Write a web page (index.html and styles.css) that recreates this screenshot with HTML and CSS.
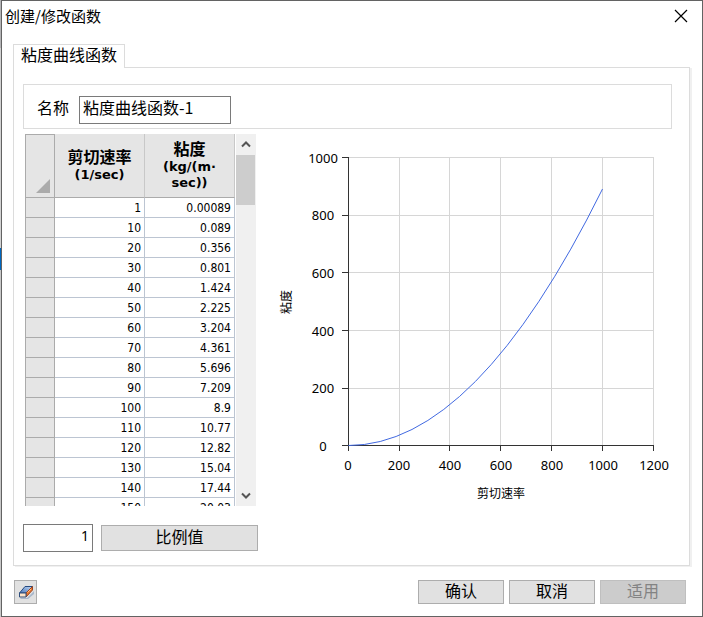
FILE: index.html
```html
<!DOCTYPE html>
<html lang="zh-CN">
<head>
<meta charset="utf-8">
<title>创建/修改函数</title>
<link rel="stylesheet" href="styles.css">
</head>
<body>
<main class="dialog">
  <header class="titlebar">
    <h1 class="title">创建/修改函数</h1>
    <button class="close" type="button" aria-label="关闭">
      <svg width="14" height="14" viewBox="0 0 14 14"><path d="M1 1l12 12M13 1L1 13" stroke="#000" stroke-width="1.2" fill="none"/></svg>
    </button>
  </header>

  <div class="tabs"><button class="tab" type="button">粘度曲线函数</button></div>

  <section class="panel">
    <div class="name-box">
      <label for="name">名称</label>
      <input id="name" class="name-input" type="text" value="粘度曲线函数-1">
    </div>

    <div class="content">
      <div class="grid">
        <div class="grid-view">
          <table class="data">
            <thead>
              <tr>
                <th class="corner"><svg width="14" height="14" viewBox="0 0 14 14"><path d="M14 0V14H0z" fill="#ababab"/></svg></th>
                <th><span class="cn">剪切速率</span><br>(1/sec)</th>
                <th><span class="cn">粘度</span><br>(kg/(m·<br>sec))</th>
              </tr>
            </thead>
            <tbody>
              <tr><th></th><td>1</td><td>0.00089</td></tr>
              <tr><th></th><td>10</td><td>0.089</td></tr>
              <tr><th></th><td>20</td><td>0.356</td></tr>
              <tr><th></th><td>30</td><td>0.801</td></tr>
              <tr><th></th><td>40</td><td>1.424</td></tr>
              <tr><th></th><td>50</td><td>2.225</td></tr>
              <tr><th></th><td>60</td><td>3.204</td></tr>
              <tr><th></th><td>70</td><td>4.361</td></tr>
              <tr><th></th><td>80</td><td>5.696</td></tr>
              <tr><th></th><td>90</td><td>7.209</td></tr>
              <tr><th></th><td>100</td><td>8.9</td></tr>
              <tr><th></th><td>110</td><td>10.77</td></tr>
              <tr><th></th><td>120</td><td>12.82</td></tr>
              <tr><th></th><td>130</td><td>15.04</td></tr>
              <tr><th></th><td>140</td><td>17.44</td></tr>
              <tr><th></th><td>150</td><td>20.03</td></tr>
            </tbody>
          </table>
        </div>
        <div class="scrollbar">
          <button class="arrow" type="button" aria-label="向上滚动"><svg width="10" height="7" viewBox="0 0 10 7"><path d="M1 5.5L5 1.5L9 5.5" stroke="#555" stroke-width="2" fill="none"/></svg></button>
          <div class="track"><div class="thumb"></div></div>
          <button class="arrow" type="button" aria-label="向下滚动"><svg width="10" height="7" viewBox="0 0 10 7"><path d="M1 1.5L5 5.5L9 1.5" stroke="#555" stroke-width="2" fill="none"/></svg></button>
        </div>
      </div>

      <svg class="chart" viewBox="0 0 402 372" role="img" aria-label="粘度 剪切速率">
        <path class="gridline" d="M78 23.5H384M78 81.5H384M78 138.5H384M78 196.5H384M78 254.5H384M129.5 23V311M179.5 23V311M230.5 23V311M281.5 23V311M332.5 23V311M383.5 23V311"/>
        <path class="axis" d="M78.5 23V317M72 311.5H384M72 23.5H78M72 81.5H78M72 138.5H78M72 196.5H78M72 254.5H78M129.5 311V317M179.5 311V317M230.5 311V317M281.5 311V317M332.5 311V317M383.5 311V317"/>
        <path class="curve" d="M78.5 311.5Q205.5 311.5 332.5 55"/>
        <g class="label">
          <text x="53" y="29">1000</text>
          <text x="53" y="86">800</text>
          <text x="53" y="144">600</text>
          <text x="53" y="202">400</text>
          <text x="53" y="259">200</text>
          <text x="53" y="317">0</text>
          <text x="78" y="336">0</text>
          <text x="129" y="336">200</text>
          <text x="180" y="336">400</text>
          <text x="231" y="336">600</text>
          <text x="282" y="336">800</text>
          <text x="333" y="336">1000</text>
          <text x="384" y="336">1200</text>
        </g>
        <g class="axis-title">
          <text x="231" y="364">剪切速率</text>
          <text transform="translate(21 168) rotate(-90)">粘度</text>
        </g>
      </svg>
    </div>

    <div class="scale-row">
      <input class="scale-input" type="text" value="1" aria-label="比例值">
      <button class="btn scale-btn" type="button">比例值</button>
    </div>
  </section>

  <footer class="footer">
    <button class="btn erase" type="button" aria-label="清除">
      <svg width="16" height="16" viewBox="0 0 16 16">
        <defs><linearGradient id="top" x1="0" y1="1" x2="1" y2="0"><stop offset="0" stop-color="#4a78bb"/><stop offset="1" stop-color="#c0d5f0"/></linearGradient></defs>
        <path d="M2 14H9L16 7V10L10 15H3z" fill="#a9b8cc"/>
        <path d="M1.5 9L7 2.5H14.5L8 9z" fill="url(#top)" stroke="#264a80"/>
        <path d="M8 9L14.5 2.5V6L8 13z" fill="#e8762c" stroke="#9c4520"/>
        <path d="M9.500 8.500L13 5" stroke="#ffc187"/>
        <path d="M1.500 9H8V13H1.500z" fill="#ffe5c8" stroke="#304f7c"/>
      </svg>
    </button>
    <div class="actions">
      <button class="btn" type="button">确认</button>
      <button class="btn" type="button">取消</button>
      <button class="btn" type="button" disabled>适用</button>
    </div>
  </footer>
</main>
</body>
</html>
```
FILE: styles.css
```css
* { box-sizing: border-box; }

body {
  margin: 0;
  padding-left: 1px;
  background: linear-gradient(#b4b4b6 0 48px, #d2d2d2 48px 248px, #0067c0 248px 270px, #c8c8c8 270px);
  color: #000;
  font: 16px/20px "Noto Sans CJK SC", sans-serif;
}

button, input { font: inherit; color: inherit; margin: 0; }

.dialog {
  display: flex;
  flex-direction: column;
  min-height: 100vh;
  border: 1px solid #636363;
  background: #fff;
}

.titlebar {
  display: flex;
  justify-content: space-between;
  align-items: center;
  height: 43px;
  padding: 0 14px 13px 3px;
}

.title { margin: 0; font-size: 15px; font-weight: 400; line-height: 20px; }

.close {
  display: flex;
  padding: 0;
  border: 0;
  background: none;
}

.tabs { display: flex; padding-left: 11px; }

.tab {
  height: 24px;
  margin-bottom: -1px;
  padding: 0 7px 5px;
  border: 1px solid #dcdcdc;
  border-bottom: 0;
  background: #fff;
  line-height: 18px;
  position: relative;
}

.panel {
  flex: 1;
  margin: 0 12px 0 11px;
  padding: 16px 17px 12px 9px;
  border: 1px solid #dcdcdc;
  box-shadow: 2px 1px 0 #f0f0f0;
}

.name-box {
  display: flex;
  align-items: center;
  gap: 10px;
  height: 45px;
  padding: 6px 13px 0;
  border: 1px solid #dcdcdc;
}

.name-box label { padding-bottom: 5px; }

.name-input {
  width: 152px;
  height: 28px;
  padding: 0 3px 6px;
  border: 1px solid #7a7a7a;
}

.content { display: flex; gap: 14px; padding: 5px 0 0 2px; }

.grid { display: flex; gap: 1px; flex: none; width: 231px; height: 372px; }

.grid-view { flex: 1; overflow: hidden; }

.data {
  width: 210px;
  table-layout: fixed;
  border-collapse: separate;
  border-spacing: 0;
  font: 12px/16px "DejaVu Sans Condensed", "DejaVu Sans", sans-serif;
}

.data th {
  padding: 0;
  background: #e5e5e5;
  border-right: 1px solid #c8c8c8;
}

.data thead th {
  height: 64px;
  border-bottom: 1px solid #ababab;
  font: bold 13px/16px "DejaVu Sans", sans-serif;
}

.data th:first-child {
  width: 30px;
  border-left: 1px solid #ababab;
  border-right-color: #ababab;
}

.data thead th:first-child { border-top: 1px solid #ababab; }

.data .corner { vertical-align: bottom; padding: 0 4px 4px 0; }
.corner svg { display: block; margin-left: auto; }

.cn { font-family: "Noto Sans CJK SC", sans-serif; font-size: 16px; }

.data tbody th { border-bottom: 1px solid #ababab; }

.data td {
  height: 20px;
  padding: 0 3px;
  text-align: right;
  border-right: 1px solid #bcc5d2;
  border-bottom: 1px solid #bcc5d2;
}

.scrollbar { display: flex; flex-direction: column; width: 20px; background: #f0f0f0; }

.arrow {
  display: flex;
  align-items: center;
  justify-content: center;
  height: 21px;
  padding: 0;
  border: 0;
  background: none;
}

.track { flex: 1; }
.thumb { height: 50px; margin-right: 1px; background: #cdcdcd; }

.chart { flex: 1; min-width: 0; align-self: flex-start; }

.gridline { stroke: #d6d6d6; fill: none; }
.axis { stroke: #333; fill: none; }
.curve { stroke: #4169e1; fill: none; }
.label { font: 13px "Noto Sans", sans-serif; text-anchor: middle; }
.axis-title { font-size: 12px; text-anchor: middle; }

.scale-row { display: flex; align-items: center; gap: 8px; padding-top: 18px; }

.scale-input {
  width: 70px;
  height: 28px;
  padding: 0 3px 6px;
  border: 1px solid #7a7a7a;
  font: 14px "Noto Sans", sans-serif;
  text-align: right;
}

.btn {
  width: 86px;
  height: 24px;
  padding: 0 0 4px;
  border: 1px solid #adadad;
  background: #e1e1e1;
  line-height: 18px;
}

.btn:disabled { border-color: #bfbfbf; background: #ccc; color: #838383; }

.scale-btn { width: 157px; height: 26px; }

.footer {
  display: flex;
  justify-content: space-between;
  padding: 14px 16px 12px 12px;
}

.btn.erase {
  display: flex;
  align-items: center;
  justify-content: center;
  width: 23px;
  padding: 0;
}

.actions { display: flex; gap: 5px; }
```
